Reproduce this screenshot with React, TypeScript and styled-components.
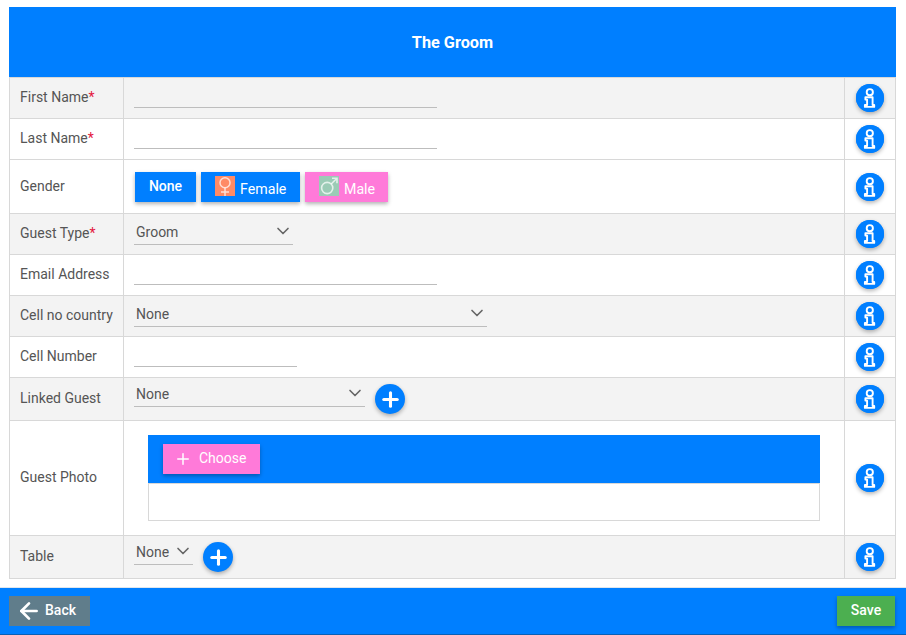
import React from 'react'
import styled, { createGlobalStyle } from 'styled-components'
import { ArrowLeft, ChevronDown, Plus } from 'lucide-react'

const BLUE = '#007fff'
const PINK = '#ff7ad9'
const LINE = '#d8d8d8'
const RAISED = '0 2px 4px rgba(0, 0, 0, 0.3)'

const GlobalStyle = createGlobalStyle`
    html, body {
        margin: 0;
        background: #fff;
        font-family: Roboto, "Liberation Sans", sans-serif;
        font-size: 14px;
        color: #555;
    }
    * {
        box-sizing: border-box;
    }
`

const Page = styled.div`
    width: 906px;
    height: 635px;
    display: flex;
    flex-direction: column;
    padding-top: 7px;
`

const FormTable = styled.div`
    width: 887px;
    margin: 0 0 8px 9px;
`

const Title = styled.div`
    height: 71px;
    display: flex;
    align-items: center;
    justify-content: center;
    background: ${BLUE};
    border-bottom: 1px solid ${LINE};
    color: #fff;
    font-size: 16.3px;
    font-weight: 700;
`

const Row = styled.div<{ $height: number, $shaded?: boolean }>`
    height: ${props => props.$height}px;
    display: grid;
    grid-template-columns: 113px 721px 51px;
    background: ${props => props.$shaded ? '#f3f3f3' : '#fff'};
    border-left: 1px solid ${LINE};
    border-right: 1px solid ${LINE};
    border-bottom: 1px solid ${LINE};
`

const Label = styled.div`
    display: flex;
    align-items: center;
    padding: 0 0 2px 10px;
    white-space: nowrap;
`

const Required = styled.span`
    color: #e3173e;
`

const Field = styled.div<{ $top?: number }>`
    display: flex;
    align-items: flex-start;
    padding: ${props => props.$top ?? 0}px 0 0 10px;
    border-left: 1px solid ${LINE};
`

const InfoCell = styled.div`
    display: flex;
    align-items: center;
    justify-content: center;
    border-left: 1px solid ${LINE};
`

const RoundButton = styled.button<{ $size: number }>`
    width: ${props => props.$size}px;
    height: ${props => props.$size}px;
    padding: 0;
    display: flex;
    align-items: center;
    justify-content: center;
    flex: none;
    border: 0;
    border-radius: 50%;
    background: ${BLUE};
    color: #fff;
    box-shadow: ${RAISED};
`

const AddButton = styled(RoundButton)`
    margin: 3px 0 0 10px;
`

const TextInput = styled.div<{ $width: number }>`
    width: ${props => props.$width}px;
    height: 20px;
    border-bottom: 1px solid #bdbdbd;
`

const Select = styled.div<{ $width: number }>`
    width: ${props => props.$width}px;
    height: 26px;
    display: flex;
    align-items: flex-start;
    justify-content: space-between;
    padding: 5px 0 0 2px;
    border-bottom: 1px solid #bdbdbd;
    line-height: 16px;
    color: #555;
    svg {
        margin-top: -3px;
        color: #666;
    }
`

const GenderGroup = styled.div`
    display: flex;
    gap: 5px;
    margin-left: 1px;
`

const SquareButton = styled.button<{ $bg: string }>`
    height: 30px;
    display: flex;
    align-items: center;
    border: 0;
    border-radius: 0;
    background: ${props => props.$bg};
    color: #fff;
    font-family: inherit;
    font-size: 14px;
    box-shadow: ${RAISED};
`

const NoneButton = styled(SquareButton)`
    width: 61px;
    justify-content: center;
    padding: 0 0 2px;
    font-weight: 500;
`

const IconButton = styled(SquareButton)<{ $width: number }>`
    width: ${props => props.$width}px;
    padding: 0 0 0 14px;
`

const GenderIcon = styled.span<{ $bg: string }>`
    width: 20px;
    height: 20px;
    margin: -2px 5px 0 0;
    display: flex;
    background: ${props => props.$bg};
`

const GenderText = styled.span`
    margin-top: 4px;
    font-size: 14.2px;
`

const Uploader = styled.div`
    width: 672px;
    margin-left: 14px;
`

const UploadBar = styled.div`
    height: 48px;
    display: flex;
    align-items: center;
    padding-left: 15px;
    background: ${BLUE};
`

const ChooseButton = styled(SquareButton)`
    width: 97px;
    padding: 0 0 0 11px;
    gap: 7px;
    span {
        margin-bottom: 3px;
    }
`

const UploadBody = styled.div`
    height: 38px;
    background: #fff;
    border: 1px solid ${LINE};
`

const Footer = styled.div`
    height: 48px;
    display: flex;
    align-items: flex-start;
    justify-content: space-between;
    padding: 8px 11px 0 9px;
    background: ${BLUE};
    border-top: 1px solid #dfe6ee;
    border-bottom: 1px solid #0a5fb5;
`

const BackButton = styled(SquareButton)`
    width: 81px;
    padding: 0 0 0 7px;
    gap: 3px;
    box-shadow: none;
    font-weight: 500;
    span {
        margin-bottom: 2px;
    }
`

const SaveButton = styled(SquareButton)`
    width: 58px;
    justify-content: center;
    padding: 0 0 2px;
    font-weight: 500;
`

// outlined "i" as on the row help buttons
const InfoIcon = () => (
    <svg width="28" height="28" viewBox="0 0 28 28" fill="none">
        <circle cx="14" cy="14" r="14" fill={BLUE} />
        <g stroke="#fff" strokeWidth="1.9" strokeLinejoin="round">
            <circle cx="13.8" cy="8.2" r="3.1" />
            <path d="M9.4 13.2h7.2v7.8h1.6v1.9H8.9V21h2.2v-5.4H9.4z" />
        </g>
    </svg>
)

const VenusIcon = () => (
    <svg width="20" height="20" viewBox="0 0 20 20" fill="none" stroke="#fff" strokeOpacity="0.72" strokeWidth="1.5">
        <circle cx="10" cy="6.8" r="5" />
        <path d="M10 11.8V20M6 16h8" />
    </svg>
)

const MarsIcon = () => (
    <svg width="20" height="20" viewBox="0 0 20 20" fill="none" stroke="#fff" strokeOpacity="0.72" strokeWidth="1.6">
        <circle cx="8.2" cy="12" r="5.6" />
        <path d="M12.2 8 18 2.2M13 2.2h5v5" />
    </svg>
)

const Info = () => (
    <InfoCell>
        <RoundButton $size={28}><InfoIcon /></RoundButton>
    </InfoCell>
)

const Add = () => (
    <AddButton $size={30}><Plus size={23} strokeWidth={3.2} /></AddButton>
)

const Chevron = () => <ChevronDown size={20} strokeWidth={2} />

export default function App() {
    return (
        <Page>
            <GlobalStyle />
            <FormTable>
                <Title>The Groom</Title>
                <Row $height={41} $shaded>
                    <Label>First Name<Required>*</Required></Label>
                    <Field $top={10}><TextInput $width={303} /></Field>
                    <Info />
                </Row>
                <Row $height={41}>
                    <Label>Last Name<Required>*</Required></Label>
                    <Field $top={10}><TextInput $width={303} /></Field>
                    <Info />
                </Row>
                <Row $height={54}>
                    <Label>Gender</Label>
                    <Field $top={12}>
                        <GenderGroup>
                            <NoneButton $bg={BLUE}>None</NoneButton>
                            <IconButton $bg={BLUE} $width={99}>
                                <GenderIcon $bg="#ff8a65"><VenusIcon /></GenderIcon>
                                <GenderText>Female</GenderText>
                            </IconButton>
                            <IconButton $bg={PINK} $width={83}>
                                <GenderIcon $bg="#9bcbb6"><MarsIcon /></GenderIcon>
                                <GenderText>Male</GenderText>
                            </IconButton>
                        </GenderGroup>
                    </Field>
                    <Info />
                </Row>
                <Row $height={41} $shaded>
                    <Label>Guest Type<Required>*</Required></Label>
                    <Field $top={5}>
                        <Select $width={159}>Groom<Chevron /></Select>
                    </Field>
                    <Info />
                </Row>
                <Row $height={41}>
                    <Label>Email Address</Label>
                    <Field $top={10}><TextInput $width={303} /></Field>
                    <Info />
                </Row>
                <Row $height={41} $shaded>
                    <Label>Cell no country</Label>
                    <Field $top={5}>
                        <Select $width={353}>None<Chevron /></Select>
                    </Field>
                    <Info />
                </Row>
                <Row $height={41}>
                    <Label>Cell Number</Label>
                    <Field $top={10}><TextInput $width={163} /></Field>
                    <Info />
                </Row>
                <Row $height={43} $shaded>
                    <Label>Linked Guest</Label>
                    <Field $top={3}>
                        <Select $width={231}>None<Chevron /></Select>
                        <Add />
                    </Field>
                    <Info />
                </Row>
                <Row $height={115}>
                    <Label>Guest Photo</Label>
                    <Field $top={14}>
                        <Uploader>
                            <UploadBar>
                                <ChooseButton $bg={PINK}>
                                    <Plus size={18} strokeWidth={2} />
                                    <span>Choose</span>
                                </ChooseButton>
                            </UploadBar>
                            <UploadBody />
                        </Uploader>
                    </Field>
                    <Info />
                </Row>
                <Row $height={43} $shaded>
                    <Label>Table</Label>
                    <Field $top={3}>
                        <Select $width={59}>None<Chevron /></Select>
                        <Add />
                    </Field>
                    <Info />
                </Row>
            </FormTable>
            <Footer>
                <BackButton $bg="#607d8b">
                    <ArrowLeft size={26} strokeWidth={2.5} />
                    <span>Back</span>
                </BackButton>
                <SaveButton $bg="#4caf50">Save</SaveButton>
            </Footer>
        </Page>
    )
}
